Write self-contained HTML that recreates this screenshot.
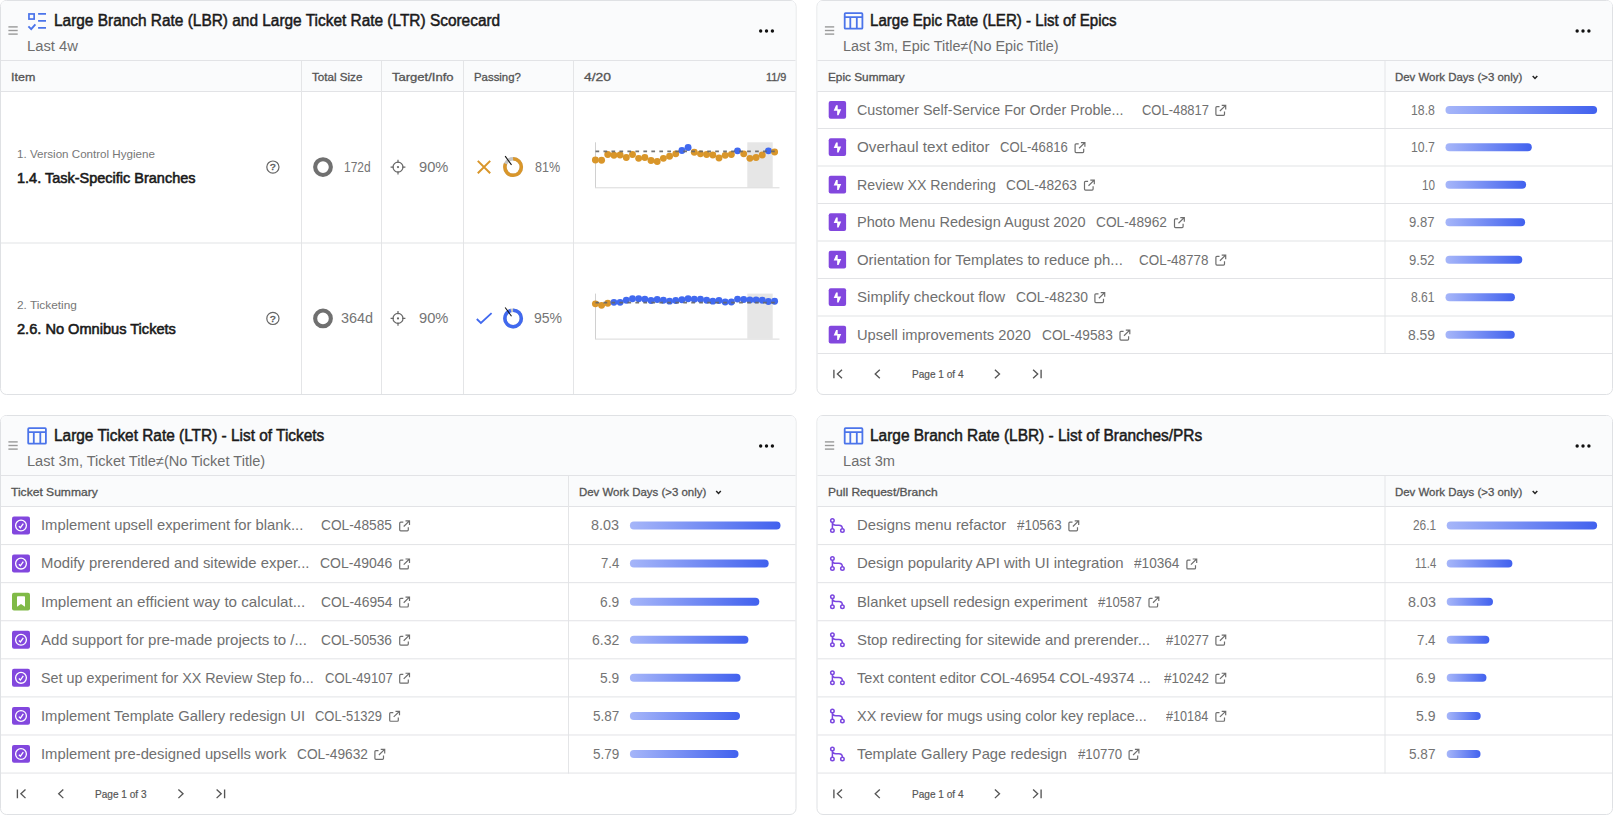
<!DOCTYPE html>
<html lang="en"><head><meta charset="utf-8"><title>Scorecard Dashboard</title>
<style>
html,body{margin:0;padding:0;background:#fff}
body{width:1613px;height:815px;position:relative;overflow:hidden;font-family:'Liberation Sans', sans-serif}
#g{position:absolute;left:0;top:0}
.t{position:absolute;white-space:pre;line-height:1;transform-origin:0 50%;display:block}
</style></head><body>
<svg id="g" width="1613" height="815" viewBox="0 0 1613 815">
<defs><linearGradient id="bg" x1="0" y1="0" x2="1" y2="0"><stop offset="0" stop-color="#a6b6f9"/><stop offset="1" stop-color="#4161ee"/></linearGradient></defs>
<rect x="0.50" y="0.50" width="795.50" height="394.00" rx="6" fill="#fff" stroke="#dfe1e4" stroke-width="1"/>
<path d="M1.00 91.00 V6.00 Q1.00 1.00 6.00 1.00 H790.50 Q795.50 1.00 795.50 6.00 V91.00 Z" fill="#fafbfc"/>
<rect x="1.00" y="60.00" width="794.50" height="1.00" fill="#e2e3e6" />
<rect x="1.00" y="91.00" width="794.50" height="1.00" fill="#e2e3e6" />
<rect x="8.40" y="26.20" width="9.30" height="1.40" fill="#9a9a9a" />
<rect x="8.40" y="29.80" width="9.30" height="1.40" fill="#9a9a9a" />
<rect x="8.40" y="33.40" width="9.30" height="1.40" fill="#9a9a9a" />
<circle cx="760.65" cy="31.00" r="1.7" fill="#111"/>
<circle cx="766.50" cy="31.00" r="1.7" fill="#111"/>
<circle cx="772.40" cy="31.00" r="1.7" fill="#111"/>
<g fill="none" stroke="#4b74ea"><rect x="28.95" y="13.95" width="5.2" height="5.1" stroke-width="1.7"/><path d="M38.1 13.95 h7.9 M38.1 20.9 h7.9 M38.1 27.95 h7.9" stroke-width="1.8"/><path d="M28.4 26.3 l2.8 2.8 l4.2 -4.8" stroke-width="1.9"/></g>
<rect x="301.00" y="61.00" width="1.00" height="333.00" fill="#e4e5e7" />
<rect x="381.00" y="61.00" width="1.00" height="333.00" fill="#e4e5e7" />
<rect x="463.00" y="61.00" width="1.00" height="333.00" fill="#e4e5e7" />
<rect x="573.00" y="61.00" width="1.00" height="333.00" fill="#e4e5e7" />
<rect x="1.00" y="242.50" width="794.50" height="1.00" fill="#e2e3e6" />
<circle cx="272.9" cy="167.10" r="6.1" fill="none" stroke="#666" stroke-width="1.2"/>
<circle cx="323" cy="167.10" r="7.85" fill="none" stroke="#707070" stroke-width="4.1"/>
<g fill="none" stroke="#666" stroke-width="1.2"><circle cx="398" cy="167.10" r="5"/><path d="M398 159.70 v3.2 M398 171.30 v3.2 M390.6 167.10 h3.2 M402.2 167.10 h3.2"/></g><circle cx="398" cy="167.10" r="1.1" fill="#666"/>
<path d="M477.8 160.90 l12.4 12.4 M490.2 160.90 l-12.4 12.4" fill="none" stroke="#d9962a" stroke-width="2"/>
<circle cx="513.10" cy="167.10" r="8.25" fill="none" stroke="#c4c4c4" stroke-width="3.5"/>
<circle cx="513.10" cy="167.10" r="8.25" fill="none" stroke="#d9962a" stroke-width="3.5" stroke-dasharray="41.99 51.84" transform="rotate(-90 513.10 167.10)"/>
<path d="M511.51 164.92 L505.16 156.18" stroke="#111" stroke-width="1.1"/>
<rect x="747.30" y="142.30" width="25.40" height="45.00" fill="#e6e6e6" />
<rect x="595.00" y="142.30" width="1.00" height="45.50" fill="#d0d0d0" />
<rect x="595.00" y="187.30" width="184.50" height="1.00" fill="#d9d9d9" />
<circle cx="595.40" cy="160.01" r="3.45" fill="#d9962a"/>
<circle cx="601.58" cy="160.28" r="3.45" fill="#d9962a"/>
<circle cx="607.76" cy="154.55" r="3.45" fill="#d9962a"/>
<circle cx="613.94" cy="155.23" r="3.45" fill="#d9962a"/>
<circle cx="620.12" cy="154.96" r="3.45" fill="#d9962a"/>
<circle cx="626.30" cy="157.55" r="3.45" fill="#d9962a"/>
<circle cx="632.48" cy="154.55" r="3.45" fill="#d9962a"/>
<circle cx="638.66" cy="158.37" r="3.45" fill="#d9962a"/>
<circle cx="644.84" cy="157.55" r="3.45" fill="#d9962a"/>
<circle cx="651.02" cy="160.55" r="3.45" fill="#d9962a"/>
<circle cx="657.20" cy="161.51" r="3.45" fill="#d9962a"/>
<circle cx="663.38" cy="158.37" r="3.45" fill="#d9962a"/>
<circle cx="669.56" cy="156.19" r="3.45" fill="#d9962a"/>
<circle cx="675.74" cy="153.87" r="3.45" fill="#d9962a"/>
<circle cx="681.92" cy="150.46" r="3.45" fill="#4169ef"/>
<circle cx="688.10" cy="147.46" r="3.45" fill="#4169ef"/>
<circle cx="694.28" cy="152.23" r="3.45" fill="#d9962a"/>
<circle cx="700.46" cy="153.87" r="3.45" fill="#d9962a"/>
<circle cx="706.64" cy="154.55" r="3.45" fill="#d9962a"/>
<circle cx="712.82" cy="154.96" r="3.45" fill="#d9962a"/>
<circle cx="719.00" cy="157.96" r="3.45" fill="#d9962a"/>
<circle cx="725.18" cy="155.37" r="3.45" fill="#d9962a"/>
<circle cx="731.36" cy="154.55" r="3.45" fill="#d9962a"/>
<circle cx="737.54" cy="150.87" r="3.45" fill="#4169ef"/>
<circle cx="743.72" cy="153.87" r="3.45" fill="#d9962a"/>
<circle cx="749.90" cy="158.37" r="3.45" fill="#d9962a"/>
<circle cx="756.08" cy="157.55" r="3.45" fill="#d9962a"/>
<circle cx="762.26" cy="154.96" r="3.45" fill="#d9962a"/>
<circle cx="768.44" cy="150.87" r="3.45" fill="#4169ef"/>
<circle cx="774.62" cy="151.96" r="3.45" fill="#d9962a"/>
<path d="M595.5 151.40 H776" stroke="#666" stroke-opacity="0.9" stroke-width="1.7" stroke-dasharray="3.7 4.28" fill="none"/>
<circle cx="272.9" cy="318.40" r="6.1" fill="none" stroke="#666" stroke-width="1.2"/>
<circle cx="323" cy="318.40" r="7.85" fill="none" stroke="#707070" stroke-width="4.1"/>
<g fill="none" stroke="#666" stroke-width="1.2"><circle cx="398" cy="318.40" r="5"/><path d="M398 311.00 v3.2 M398 322.60 v3.2 M390.6 318.40 h3.2 M402.2 318.40 h3.2"/></g><circle cx="398" cy="318.40" r="1.1" fill="#666"/>
<path d="M476.8 319.00 L480.9 323.00 L491.6 313.20" fill="none" stroke="#4169ef" stroke-width="1.8"/>
<circle cx="513.10" cy="318.40" r="8.25" fill="none" stroke="#c4c4c4" stroke-width="3.5"/>
<circle cx="513.10" cy="318.40" r="8.25" fill="none" stroke="#4169ef" stroke-width="3.5" stroke-dasharray="49.24 51.84" transform="rotate(-90 513.10 318.40)"/>
<path d="M511.51 316.22 L505.16 307.48" stroke="#111" stroke-width="1.1"/>
<rect x="747.30" y="293.60" width="25.40" height="45.00" fill="#e6e6e6" />
<rect x="595.00" y="293.60" width="1.00" height="45.50" fill="#d0d0d0" />
<rect x="595.00" y="338.60" width="184.50" height="1.00" fill="#d9d9d9" />
<circle cx="595.40" cy="303.87" r="3.45" fill="#d9962a"/>
<circle cx="601.58" cy="305.37" r="3.45" fill="#d9962a"/>
<circle cx="607.76" cy="303.19" r="3.45" fill="#d9962a"/>
<circle cx="613.94" cy="302.37" r="3.45" fill="#4169ef"/>
<circle cx="620.12" cy="302.37" r="3.45" fill="#4169ef"/>
<circle cx="626.30" cy="300.19" r="3.45" fill="#4169ef"/>
<circle cx="632.48" cy="298.69" r="3.45" fill="#4169ef"/>
<circle cx="638.66" cy="298.69" r="3.45" fill="#4169ef"/>
<circle cx="644.84" cy="299.23" r="3.45" fill="#4169ef"/>
<circle cx="651.02" cy="300.46" r="3.45" fill="#4169ef"/>
<circle cx="657.20" cy="299.50" r="3.45" fill="#4169ef"/>
<circle cx="663.38" cy="300.19" r="3.45" fill="#4169ef"/>
<circle cx="669.56" cy="301.14" r="3.45" fill="#4169ef"/>
<circle cx="675.74" cy="300.46" r="3.45" fill="#4169ef"/>
<circle cx="681.92" cy="299.78" r="3.45" fill="#4169ef"/>
<circle cx="688.10" cy="298.69" r="3.45" fill="#4169ef"/>
<circle cx="694.28" cy="299.23" r="3.45" fill="#4169ef"/>
<circle cx="700.46" cy="299.23" r="3.45" fill="#4169ef"/>
<circle cx="706.64" cy="300.19" r="3.45" fill="#4169ef"/>
<circle cx="712.82" cy="301.14" r="3.45" fill="#4169ef"/>
<circle cx="719.00" cy="300.46" r="3.45" fill="#4169ef"/>
<circle cx="725.18" cy="301.96" r="3.45" fill="#4169ef"/>
<circle cx="731.36" cy="301.96" r="3.45" fill="#4169ef"/>
<circle cx="737.54" cy="299.09" r="3.45" fill="#4169ef"/>
<circle cx="743.72" cy="299.50" r="3.45" fill="#4169ef"/>
<circle cx="749.90" cy="299.91" r="3.45" fill="#4169ef"/>
<circle cx="756.08" cy="299.91" r="3.45" fill="#4169ef"/>
<circle cx="762.26" cy="300.19" r="3.45" fill="#4169ef"/>
<circle cx="768.44" cy="301.55" r="3.45" fill="#4169ef"/>
<circle cx="774.62" cy="301.28" r="3.45" fill="#4169ef"/>
<path d="M595.5 302.70 H776" stroke="#666" stroke-opacity="0.9" stroke-width="1.7" stroke-dasharray="3.7 4.28" fill="none"/>
<rect x="817.00" y="0.50" width="795.50" height="394.00" rx="6" fill="#fff" stroke="#dfe1e4" stroke-width="1"/>
<path d="M817.50 91.00 V6.00 Q817.50 1.00 822.50 1.00 H1607.00 Q1612.00 1.00 1612.00 6.00 V91.00 Z" fill="#fafbfc"/>
<rect x="817.50" y="60.00" width="794.50" height="1.00" fill="#e2e3e6" />
<rect x="817.50" y="91.00" width="794.50" height="1.00" fill="#e2e3e6" />
<rect x="824.90" y="26.20" width="9.30" height="1.40" fill="#9a9a9a" />
<rect x="824.90" y="29.80" width="9.30" height="1.40" fill="#9a9a9a" />
<rect x="824.90" y="33.40" width="9.30" height="1.40" fill="#9a9a9a" />
<circle cx="1577.15" cy="31.00" r="1.7" fill="#111"/>
<circle cx="1583.00" cy="31.00" r="1.7" fill="#111"/>
<circle cx="1588.90" cy="31.00" r="1.7" fill="#111"/>
<g fill="none" stroke="#4b74ea" stroke-width="1.8"><rect x="844.70" y="13.10" width="17.70" height="15.60" rx="0.8"/><path d="M844.70 17.20 h17.7 M850.30 17.20 v11.5 M856.80 17.20 v11.5"/></g>
<path d="M1532.70 76.00 L1535.00 78.40 L1537.30 76.00" fill="none" stroke="#222" stroke-width="1.5"/>
<rect x="1384.50" y="61.00" width="1.00" height="293.00" fill="#e4e5e7" />
<rect x="817.50" y="128.00" width="794.50" height="1.00" fill="#e2e3e6" />
<rect x="828.70" y="101.10" width="17.4" height="17.6" rx="2" fill="#8247de"/>
<polygon fill="#fff" points="836.06,105.15 837.70,105.15 837.70,109.20 841.20,109.20 838.60,115.30 837.16,115.30 837.16,110.85 833.67,110.85"/>
<g fill="none" stroke="#6e6e6e" stroke-width="1.2"><path d="M1219.50 106.60 H1216.90 Q1215.90 106.60 1215.90 107.60 V114.30 Q1215.90 115.30 1216.90 115.30 H1223.50 Q1224.50 115.30 1224.50 114.30 V111.60"/><path d="M1219.90 111.00 L1225.60 105.40 M1221.70 105.40 H1225.70 V109.40"/></g>
<rect x="1445.50" y="106.00" width="151.60" height="8.00" fill="url(#bg)" rx="4" />
<rect x="817.50" y="165.50" width="794.50" height="1.00" fill="#e2e3e6" />
<rect x="828.70" y="138.35" width="17.4" height="17.6" rx="2" fill="#8247de"/>
<polygon fill="#fff" points="836.06,142.40 837.70,142.40 837.70,146.45 841.20,146.45 838.60,152.55 837.16,152.55 837.16,148.10 833.67,148.10"/>
<g fill="none" stroke="#6e6e6e" stroke-width="1.2"><path d="M1078.70 143.85 H1076.10 Q1075.10 143.85 1075.10 144.85 V151.55 Q1075.10 152.55 1076.10 152.55 H1082.70 Q1083.70 152.55 1083.70 151.55 V148.85"/><path d="M1079.10 148.25 L1084.80 142.65 M1080.90 142.65 H1084.90 V146.65"/></g>
<rect x="1445.50" y="143.25" width="86.28" height="8.00" fill="url(#bg)" rx="4" />
<rect x="817.50" y="203.00" width="794.50" height="1.00" fill="#e2e3e6" />
<rect x="828.70" y="175.85" width="17.4" height="17.6" rx="2" fill="#8247de"/>
<polygon fill="#fff" points="836.06,179.90 837.70,179.90 837.70,183.95 841.20,183.95 838.60,190.05 837.16,190.05 837.16,185.60 833.67,185.60"/>
<g fill="none" stroke="#6e6e6e" stroke-width="1.2"><path d="M1088.10 181.35 H1085.50 Q1084.50 181.35 1084.50 182.35 V189.05 Q1084.50 190.05 1085.50 190.05 H1092.10 Q1093.10 190.05 1093.10 189.05 V186.35"/><path d="M1088.50 185.75 L1094.20 180.15 M1090.30 180.15 H1094.30 V184.15"/></g>
<rect x="1445.50" y="180.75" width="80.64" height="8.00" fill="url(#bg)" rx="4" />
<rect x="817.50" y="240.50" width="794.50" height="1.00" fill="#e2e3e6" />
<rect x="828.70" y="213.35" width="17.4" height="17.6" rx="2" fill="#8247de"/>
<polygon fill="#fff" points="836.06,217.40 837.70,217.40 837.70,221.45 841.20,221.45 838.60,227.55 837.16,227.55 837.16,223.10 833.67,223.10"/>
<g fill="none" stroke="#6e6e6e" stroke-width="1.2"><path d="M1178.10 218.85 H1175.50 Q1174.50 218.85 1174.50 219.85 V226.55 Q1174.50 227.55 1175.50 227.55 H1182.10 Q1183.10 227.55 1183.10 226.55 V223.85"/><path d="M1178.50 223.25 L1184.20 217.65 M1180.30 217.65 H1184.30 V221.65"/></g>
<rect x="1445.50" y="218.25" width="79.59" height="8.00" fill="url(#bg)" rx="4" />
<rect x="817.50" y="278.00" width="794.50" height="1.00" fill="#e2e3e6" />
<rect x="828.70" y="250.85" width="17.4" height="17.6" rx="2" fill="#8247de"/>
<polygon fill="#fff" points="836.06,254.90 837.70,254.90 837.70,258.95 841.20,258.95 838.60,265.05 837.16,265.05 837.16,260.60 833.67,260.60"/>
<g fill="none" stroke="#6e6e6e" stroke-width="1.2"><path d="M1219.50 256.35 H1216.90 Q1215.90 256.35 1215.90 257.35 V264.05 Q1215.90 265.05 1216.90 265.05 H1223.50 Q1224.50 265.05 1224.50 264.05 V261.35"/><path d="M1219.90 260.75 L1225.60 255.15 M1221.70 255.15 H1225.70 V259.15"/></g>
<rect x="1445.50" y="255.75" width="76.77" height="8.00" fill="url(#bg)" rx="4" />
<rect x="817.50" y="315.50" width="794.50" height="1.00" fill="#e2e3e6" />
<rect x="828.70" y="288.35" width="17.4" height="17.6" rx="2" fill="#8247de"/>
<polygon fill="#fff" points="836.06,292.40 837.70,292.40 837.70,296.45 841.20,296.45 838.60,302.55 837.16,302.55 837.16,298.10 833.67,298.10"/>
<g fill="none" stroke="#6e6e6e" stroke-width="1.2"><path d="M1098.50 293.85 H1095.90 Q1094.90 293.85 1094.90 294.85 V301.55 Q1094.90 302.55 1095.90 302.55 H1102.50 Q1103.50 302.55 1103.50 301.55 V298.85"/><path d="M1098.90 298.25 L1104.60 292.65 M1100.70 292.65 H1104.70 V296.65"/></g>
<rect x="1445.50" y="293.25" width="69.43" height="8.00" fill="url(#bg)" rx="4" />
<rect x="817.50" y="353.00" width="794.50" height="1.00" fill="#e2e3e6" />
<rect x="828.70" y="325.85" width="17.4" height="17.6" rx="2" fill="#8247de"/>
<polygon fill="#fff" points="836.06,329.90 837.70,329.90 837.70,333.95 841.20,333.95 838.60,340.05 837.16,340.05 837.16,335.60 833.67,335.60"/>
<g fill="none" stroke="#6e6e6e" stroke-width="1.2"><path d="M1123.60 331.35 H1121.00 Q1120.00 331.35 1120.00 332.35 V339.05 Q1120.00 340.05 1121.00 340.05 H1127.60 Q1128.60 340.05 1128.60 339.05 V336.35"/><path d="M1124.00 335.75 L1129.70 330.15 M1125.80 330.15 H1129.80 V334.15"/></g>
<rect x="1445.50" y="330.75" width="69.27" height="8.00" fill="url(#bg)" rx="4" />
<path d="M833.90 369.75 v8.6 M842.00 369.75 l-4.6 4.3 l4.6 4.3" fill="none" stroke="#555" stroke-width="1.35"/>
<path d="M879.80 369.75 l-4.6 4.3 l4.6 4.3" fill="none" stroke="#555" stroke-width="1.35"/>
<path d="M994.90 369.75 l4.6 4.3 l-4.6 4.3" fill="none" stroke="#555" stroke-width="1.35"/>
<path d="M1033.10 369.75 l4.6 4.3 l-4.6 4.3 M1041.10 369.75 v8.6" fill="none" stroke="#555" stroke-width="1.35"/>
<rect x="0.50" y="415.50" width="795.50" height="399.00" rx="6" fill="#fff" stroke="#dfe1e4" stroke-width="1"/>
<path d="M1.00 506.00 V421.00 Q1.00 416.00 6.00 416.00 H790.50 Q795.50 416.00 795.50 421.00 V506.00 Z" fill="#fafbfc"/>
<rect x="1.00" y="475.00" width="794.50" height="1.00" fill="#e2e3e6" />
<rect x="1.00" y="506.00" width="794.50" height="1.00" fill="#e2e3e6" />
<rect x="8.40" y="441.20" width="9.30" height="1.40" fill="#9a9a9a" />
<rect x="8.40" y="444.80" width="9.30" height="1.40" fill="#9a9a9a" />
<rect x="8.40" y="448.40" width="9.30" height="1.40" fill="#9a9a9a" />
<circle cx="760.65" cy="446.00" r="1.7" fill="#111"/>
<circle cx="766.50" cy="446.00" r="1.7" fill="#111"/>
<circle cx="772.40" cy="446.00" r="1.7" fill="#111"/>
<g fill="none" stroke="#4b74ea" stroke-width="1.8"><rect x="28.20" y="428.10" width="17.70" height="15.60" rx="0.8"/><path d="M28.20 432.20 h17.7 M33.80 432.20 v11.5 M40.30 432.20 v11.5"/></g>
<path d="M716.20 491.00 L718.50 493.40 L720.80 491.00" fill="none" stroke="#222" stroke-width="1.5"/>
<rect x="568.00" y="476.00" width="1.00" height="297.56" fill="#e4e5e7" />
<rect x="1.00" y="544.08" width="794.50" height="1.00" fill="#e2e3e6" />
<rect x="12.00" y="516.49" width="18" height="17.9" rx="2" fill="#8247de"/>
<circle cx="21.00" cy="525.54" r="5.4" fill="none" stroke="#fff" stroke-width="1.3"/>
<path d="M18.90 526.24 l1.5 1.5 l2.9 -4.2" fill="none" stroke="#fff" stroke-width="1.3"/>
<g fill="none" stroke="#6e6e6e" stroke-width="1.2"><path d="M403.30 522.14 H400.70 Q399.70 522.14 399.70 523.14 V529.84 Q399.70 530.84 400.70 530.84 H407.30 Q408.30 530.84 408.30 529.84 V527.14"/><path d="M403.70 526.54 L409.40 520.94 M405.50 520.94 H409.50 V524.94"/></g>
<rect x="629.90" y="521.54" width="150.60" height="8.00" fill="url(#bg)" rx="4" />
<rect x="1.00" y="582.16" width="794.50" height="1.00" fill="#e2e3e6" />
<rect x="12.00" y="554.57" width="18" height="17.9" rx="2" fill="#8247de"/>
<circle cx="21.00" cy="563.62" r="5.4" fill="none" stroke="#fff" stroke-width="1.3"/>
<path d="M18.90 564.32 l1.5 1.5 l2.9 -4.2" fill="none" stroke="#fff" stroke-width="1.3"/>
<g fill="none" stroke="#6e6e6e" stroke-width="1.2"><path d="M403.30 560.22 H400.70 Q399.70 560.22 399.70 561.22 V567.92 Q399.70 568.92 400.70 568.92 H407.30 Q408.30 568.92 408.30 567.92 V565.22"/><path d="M403.70 564.62 L409.40 559.02 M405.50 559.02 H409.50 V563.02"/></g>
<rect x="629.90" y="559.62" width="138.78" height="8.00" fill="url(#bg)" rx="4" />
<rect x="1.00" y="620.24" width="794.50" height="1.00" fill="#e2e3e6" />
<rect x="12.00" y="592.65" width="18" height="17.9" rx="2" fill="#80ba47"/>
<path d="M17.00 596.95 q0 -0.8 0.8 -0.8 h6.4 q0.8 0 0.8 0.8 V606.85 L21.00 604.05 L17.00 606.85 Z" fill="#fff"/>
<g fill="none" stroke="#6e6e6e" stroke-width="1.2"><path d="M403.30 598.30 H400.70 Q399.70 598.30 399.70 599.30 V606.00 Q399.70 607.00 400.70 607.00 H407.30 Q408.30 607.00 408.30 606.00 V603.30"/><path d="M403.70 602.70 L409.40 597.10 M405.50 597.10 H409.50 V601.10"/></g>
<rect x="629.90" y="597.70" width="129.41" height="8.00" fill="url(#bg)" rx="4" />
<rect x="1.00" y="658.32" width="794.50" height="1.00" fill="#e2e3e6" />
<rect x="12.00" y="630.73" width="18" height="17.9" rx="2" fill="#8247de"/>
<circle cx="21.00" cy="639.78" r="5.4" fill="none" stroke="#fff" stroke-width="1.3"/>
<path d="M18.90 640.48 l1.5 1.5 l2.9 -4.2" fill="none" stroke="#fff" stroke-width="1.3"/>
<g fill="none" stroke="#6e6e6e" stroke-width="1.2"><path d="M403.30 636.38 H400.70 Q399.70 636.38 399.70 637.38 V644.08 Q399.70 645.08 400.70 645.08 H407.30 Q408.30 645.08 408.30 644.08 V641.38"/><path d="M403.70 640.78 L409.40 635.18 M405.50 635.18 H409.50 V639.18"/></g>
<rect x="629.90" y="635.78" width="118.53" height="8.00" fill="url(#bg)" rx="4" />
<rect x="1.00" y="696.40" width="794.50" height="1.00" fill="#e2e3e6" />
<rect x="12.00" y="668.81" width="18" height="17.9" rx="2" fill="#8247de"/>
<circle cx="21.00" cy="677.86" r="5.4" fill="none" stroke="#fff" stroke-width="1.3"/>
<path d="M18.90 678.56 l1.5 1.5 l2.9 -4.2" fill="none" stroke="#fff" stroke-width="1.3"/>
<g fill="none" stroke="#6e6e6e" stroke-width="1.2"><path d="M403.30 674.46 H400.70 Q399.70 674.46 399.70 675.46 V682.16 Q399.70 683.16 400.70 683.16 H407.30 Q408.30 683.16 408.30 682.16 V679.46"/><path d="M403.70 678.86 L409.40 673.26 M405.50 673.26 H409.50 V677.26"/></g>
<rect x="629.90" y="673.86" width="110.65" height="8.00" fill="url(#bg)" rx="4" />
<rect x="1.00" y="734.48" width="794.50" height="1.00" fill="#e2e3e6" />
<rect x="12.00" y="706.89" width="18" height="17.9" rx="2" fill="#8247de"/>
<circle cx="21.00" cy="715.94" r="5.4" fill="none" stroke="#fff" stroke-width="1.3"/>
<path d="M18.90 716.64 l1.5 1.5 l2.9 -4.2" fill="none" stroke="#fff" stroke-width="1.3"/>
<g fill="none" stroke="#6e6e6e" stroke-width="1.2"><path d="M393.30 712.54 H390.70 Q389.70 712.54 389.70 713.54 V720.24 Q389.70 721.24 390.70 721.24 H397.30 Q398.30 721.24 398.30 720.24 V717.54"/><path d="M393.70 716.94 L399.40 711.34 M395.50 711.34 H399.50 V715.34"/></g>
<rect x="629.90" y="711.94" width="110.09" height="8.00" fill="url(#bg)" rx="4" />
<rect x="1.00" y="772.56" width="794.50" height="1.00" fill="#e2e3e6" />
<rect x="12.00" y="744.97" width="18" height="17.9" rx="2" fill="#8247de"/>
<circle cx="21.00" cy="754.02" r="5.4" fill="none" stroke="#fff" stroke-width="1.3"/>
<path d="M18.90 754.72 l1.5 1.5 l2.9 -4.2" fill="none" stroke="#fff" stroke-width="1.3"/>
<g fill="none" stroke="#6e6e6e" stroke-width="1.2"><path d="M378.50 750.62 H375.90 Q374.90 750.62 374.90 751.62 V758.32 Q374.90 759.32 375.90 759.32 H382.50 Q383.50 759.32 383.50 758.32 V755.62"/><path d="M378.90 755.02 L384.60 749.42 M380.70 749.42 H384.70 V753.42"/></g>
<rect x="629.90" y="750.02" width="108.59" height="8.00" fill="url(#bg)" rx="4" />
<path d="M17.40 789.53 v8.6 M25.50 789.53 l-4.6 4.3 l4.6 4.3" fill="none" stroke="#555" stroke-width="1.35"/>
<path d="M63.30 789.53 l-4.6 4.3 l4.6 4.3" fill="none" stroke="#555" stroke-width="1.35"/>
<path d="M178.40 789.53 l4.6 4.3 l-4.6 4.3" fill="none" stroke="#555" stroke-width="1.35"/>
<path d="M216.60 789.53 l4.6 4.3 l-4.6 4.3 M224.60 789.53 v8.6" fill="none" stroke="#555" stroke-width="1.35"/>
<rect x="817.00" y="415.50" width="795.50" height="399.00" rx="6" fill="#fff" stroke="#dfe1e4" stroke-width="1"/>
<path d="M817.50 506.00 V421.00 Q817.50 416.00 822.50 416.00 H1607.00 Q1612.00 416.00 1612.00 421.00 V506.00 Z" fill="#fafbfc"/>
<rect x="817.50" y="475.00" width="794.50" height="1.00" fill="#e2e3e6" />
<rect x="817.50" y="506.00" width="794.50" height="1.00" fill="#e2e3e6" />
<rect x="824.90" y="441.20" width="9.30" height="1.40" fill="#9a9a9a" />
<rect x="824.90" y="444.80" width="9.30" height="1.40" fill="#9a9a9a" />
<rect x="824.90" y="448.40" width="9.30" height="1.40" fill="#9a9a9a" />
<circle cx="1577.15" cy="446.00" r="1.7" fill="#111"/>
<circle cx="1583.00" cy="446.00" r="1.7" fill="#111"/>
<circle cx="1588.90" cy="446.00" r="1.7" fill="#111"/>
<g fill="none" stroke="#4b74ea" stroke-width="1.8"><rect x="844.70" y="428.10" width="17.70" height="15.60" rx="0.8"/><path d="M844.70 432.20 h17.7 M850.30 432.20 v11.5 M856.80 432.20 v11.5"/></g>
<path d="M1532.70 491.00 L1535.00 493.40 L1537.30 491.00" fill="none" stroke="#222" stroke-width="1.5"/>
<rect x="1384.50" y="476.00" width="1.00" height="297.56" fill="#e4e5e7" />
<rect x="817.50" y="544.08" width="794.50" height="1.00" fill="#e2e3e6" />
<g fill="none" stroke="#7b47e0" stroke-width="1.5"><circle cx="832.40" cy="520.54" r="1.75"/><circle cx="832.40" cy="530.54" r="1.75"/><circle cx="842.40" cy="530.54" r="1.75"/><path d="M832.40 522.34 V528.74 M832.40 522.34 C832.40 525.04 833.70 525.24 835.90 525.24 H838.90 C841.30 525.24 842.40 526.34 842.40 528.74"/></g>
<g fill="none" stroke="#6e6e6e" stroke-width="1.2"><path d="M1072.50 522.14 H1069.90 Q1068.90 522.14 1068.90 523.14 V529.84 Q1068.90 530.84 1069.90 530.84 H1076.50 Q1077.50 530.84 1077.50 529.84 V527.14"/><path d="M1072.90 526.54 L1078.60 520.94 M1074.70 520.94 H1078.70 V524.94"/></g>
<rect x="1446.70" y="521.54" width="150.40" height="8.00" fill="url(#bg)" rx="4" />
<rect x="817.50" y="582.16" width="794.50" height="1.00" fill="#e2e3e6" />
<g fill="none" stroke="#7b47e0" stroke-width="1.5"><circle cx="832.40" cy="558.62" r="1.75"/><circle cx="832.40" cy="568.62" r="1.75"/><circle cx="842.40" cy="568.62" r="1.75"/><path d="M832.40 560.42 V566.82 M832.40 560.42 C832.40 563.12 833.70 563.32 835.90 563.32 H838.90 C841.30 563.32 842.40 564.42 842.40 566.82"/></g>
<g fill="none" stroke="#6e6e6e" stroke-width="1.2"><path d="M1190.50 560.22 H1187.90 Q1186.90 560.22 1186.90 561.22 V567.92 Q1186.90 568.92 1187.90 568.92 H1194.50 Q1195.50 568.92 1195.50 567.92 V565.22"/><path d="M1190.90 564.62 L1196.60 559.02 M1192.70 559.02 H1196.70 V563.02"/></g>
<rect x="1446.70" y="559.62" width="65.69" height="8.00" fill="url(#bg)" rx="4" />
<rect x="817.50" y="620.24" width="794.50" height="1.00" fill="#e2e3e6" />
<g fill="none" stroke="#7b47e0" stroke-width="1.5"><circle cx="832.40" cy="596.70" r="1.75"/><circle cx="832.40" cy="606.70" r="1.75"/><circle cx="842.40" cy="606.70" r="1.75"/><path d="M832.40 598.50 V604.90 M832.40 598.50 C832.40 601.20 833.70 601.40 835.90 601.40 H838.90 C841.30 601.40 842.40 602.50 842.40 604.90"/></g>
<g fill="none" stroke="#6e6e6e" stroke-width="1.2"><path d="M1152.60 598.30 H1150.00 Q1149.00 598.30 1149.00 599.30 V606.00 Q1149.00 607.00 1150.00 607.00 H1156.60 Q1157.60 607.00 1157.60 606.00 V603.30"/><path d="M1153.00 602.70 L1158.70 597.10 M1154.80 597.10 H1158.80 V601.10"/></g>
<rect x="1446.70" y="597.70" width="46.27" height="8.00" fill="url(#bg)" rx="4" />
<rect x="817.50" y="658.32" width="794.50" height="1.00" fill="#e2e3e6" />
<g fill="none" stroke="#7b47e0" stroke-width="1.5"><circle cx="832.40" cy="634.78" r="1.75"/><circle cx="832.40" cy="644.78" r="1.75"/><circle cx="842.40" cy="644.78" r="1.75"/><path d="M832.40 636.58 V642.98 M832.40 636.58 C832.40 639.28 833.70 639.48 835.90 639.48 H838.90 C841.30 639.48 842.40 640.58 842.40 642.98"/></g>
<g fill="none" stroke="#6e6e6e" stroke-width="1.2"><path d="M1219.50 636.38 H1216.90 Q1215.90 636.38 1215.90 637.38 V644.08 Q1215.90 645.08 1216.90 645.08 H1223.50 Q1224.50 645.08 1224.50 644.08 V641.38"/><path d="M1219.90 640.78 L1225.60 635.18 M1221.70 635.18 H1225.70 V639.18"/></g>
<rect x="1446.70" y="635.78" width="42.64" height="8.00" fill="url(#bg)" rx="4" />
<rect x="817.50" y="696.40" width="794.50" height="1.00" fill="#e2e3e6" />
<g fill="none" stroke="#7b47e0" stroke-width="1.5"><circle cx="832.40" cy="672.86" r="1.75"/><circle cx="832.40" cy="682.86" r="1.75"/><circle cx="842.40" cy="682.86" r="1.75"/><path d="M832.40 674.66 V681.06 M832.40 674.66 C832.40 677.36 833.70 677.56 835.90 677.56 H838.90 C841.30 677.56 842.40 678.66 842.40 681.06"/></g>
<g fill="none" stroke="#6e6e6e" stroke-width="1.2"><path d="M1219.50 674.46 H1216.90 Q1215.90 674.46 1215.90 675.46 V682.16 Q1215.90 683.16 1216.90 683.16 H1223.50 Q1224.50 683.16 1224.50 682.16 V679.46"/><path d="M1219.90 678.86 L1225.60 673.26 M1221.70 673.26 H1225.70 V677.26"/></g>
<rect x="1446.70" y="673.86" width="39.76" height="8.00" fill="url(#bg)" rx="4" />
<rect x="817.50" y="734.48" width="794.50" height="1.00" fill="#e2e3e6" />
<g fill="none" stroke="#7b47e0" stroke-width="1.5"><circle cx="832.40" cy="710.94" r="1.75"/><circle cx="832.40" cy="720.94" r="1.75"/><circle cx="842.40" cy="720.94" r="1.75"/><path d="M832.40 712.74 V719.14 M832.40 712.74 C832.40 715.44 833.70 715.64 835.90 715.64 H838.90 C841.30 715.64 842.40 716.74 842.40 719.14"/></g>
<g fill="none" stroke="#6e6e6e" stroke-width="1.2"><path d="M1219.50 712.54 H1216.90 Q1215.90 712.54 1215.90 713.54 V720.24 Q1215.90 721.24 1216.90 721.24 H1223.50 Q1224.50 721.24 1224.50 720.24 V717.54"/><path d="M1219.90 716.94 L1225.60 711.34 M1221.70 711.34 H1225.70 V715.34"/></g>
<rect x="1446.70" y="711.94" width="34.00" height="8.00" fill="url(#bg)" rx="4" />
<rect x="817.50" y="772.56" width="794.50" height="1.00" fill="#e2e3e6" />
<g fill="none" stroke="#7b47e0" stroke-width="1.5"><circle cx="832.40" cy="749.02" r="1.75"/><circle cx="832.40" cy="759.02" r="1.75"/><circle cx="842.40" cy="759.02" r="1.75"/><path d="M832.40 750.82 V757.22 M832.40 750.82 C832.40 753.52 833.70 753.72 835.90 753.72 H838.90 C841.30 753.72 842.40 754.82 842.40 757.22"/></g>
<g fill="none" stroke="#6e6e6e" stroke-width="1.2"><path d="M1132.70 750.62 H1130.10 Q1129.10 750.62 1129.10 751.62 V758.32 Q1129.10 759.32 1130.10 759.32 H1136.70 Q1137.70 759.32 1137.70 758.32 V755.62"/><path d="M1133.10 755.02 L1138.80 749.42 M1134.90 749.42 H1138.90 V753.42"/></g>
<rect x="1446.70" y="750.02" width="33.83" height="8.00" fill="url(#bg)" rx="4" />
<path d="M833.90 789.53 v8.6 M842.00 789.53 l-4.6 4.3 l4.6 4.3" fill="none" stroke="#555" stroke-width="1.35"/>
<path d="M879.80 789.53 l-4.6 4.3 l4.6 4.3" fill="none" stroke="#555" stroke-width="1.35"/>
<path d="M994.90 789.53 l4.6 4.3 l-4.6 4.3" fill="none" stroke="#555" stroke-width="1.35"/>
<path d="M1033.10 789.53 l4.6 4.3 l-4.6 4.3 M1041.10 789.53 v8.6" fill="none" stroke="#555" stroke-width="1.35"/>
</svg>
<section class="panel" aria-label="Scorecard">
<span class="t" style="left:53.50px;top:12px;line-height:17px;font-size:15.8px;color:#1a1a1a;transform:scaleX(0.9760);-webkit-text-stroke:0.5px #1a1a1a">Large Branch Rate (LBR) and Large Ticket Rate (LTR) Scorecard</span>
<span class="t" style="left:26.90px;top:38px;line-height:16px;font-size:14px;color:#6e6e6e;transform:scaleX(1.0549)">Last 4w</span>
<span class="t" style="left:11.20px;top:71px;line-height:12px;font-size:11px;color:#555;transform:scaleX(1.1352);-webkit-text-stroke:0.3px #555">Item</span>
<span class="t" style="left:312.00px;top:71px;line-height:12px;font-size:11px;color:#555;transform:scaleX(1.0565);-webkit-text-stroke:0.3px #555">Total Size</span>
<span class="t" style="left:392.00px;top:71px;line-height:12px;font-size:11px;color:#555;transform:scaleX(1.1850);-webkit-text-stroke:0.3px #555">Target/Info</span>
<span class="t" style="left:474.20px;top:71px;line-height:12px;font-size:11px;color:#555;transform:scaleX(1.0361);-webkit-text-stroke:0.3px #555">Passing?</span>
<span class="t" style="left:583.80px;top:71px;line-height:12px;font-size:11px;color:#555;transform:scaleX(1.2604);-webkit-text-stroke:0.3px #555">4/20</span>
<span class="t" style="left:765.50px;top:71px;line-height:12px;font-size:11px;color:#555;transform:scaleX(0.9906);-webkit-text-stroke:0.3px #555">11/9</span>
<span class="t" style="left:16.80px;top:148px;line-height:12px;font-size:11.5px;color:#777;transform:scaleX(1.0079)">1. Version Control Hygiene</span>
<span class="t" style="left:16.80px;top:171px;line-height:15px;font-size:13.8px;color:#1a1a1a;transform:scaleX(1.0500);-webkit-text-stroke:0.55px #1a1a1a">1.4. Task-Specific Branches</span>
<span class="t" style="left:270.00px;top:161px;line-height:11px;font-size:9.5px;color:#5a5a5a;transform:scaleX(1.0572);-webkit-text-stroke:0.4px #5a5a5a">?</span>
<span class="t" style="left:343.80px;top:159px;line-height:16px;font-size:14.8px;color:#757575;transform:scaleX(0.8080)">172d</span>
<span class="t" style="left:418.50px;top:159px;line-height:16px;font-size:14.8px;color:#757575;transform:scaleX(0.9924)">90%</span>
<span class="t" style="left:535.10px;top:159px;line-height:16px;font-size:14.8px;color:#757575;transform:scaleX(0.8506)">81%</span>
<span class="t" style="left:16.80px;top:299px;line-height:12px;font-size:11.5px;color:#777;transform:scaleX(1.0280)">2. Ticketing</span>
<span class="t" style="left:16.80px;top:322px;line-height:15px;font-size:13.8px;color:#1a1a1a;transform:scaleX(1.0572);-webkit-text-stroke:0.55px #1a1a1a">2.6. No Omnibus Tickets</span>
<span class="t" style="left:270.00px;top:313px;line-height:11px;font-size:9.5px;color:#5a5a5a;transform:scaleX(1.0572);-webkit-text-stroke:0.4px #5a5a5a">?</span>
<span class="t" style="left:340.80px;top:310px;line-height:16px;font-size:14.8px;color:#757575;transform:scaleX(0.9750)">364d</span>
<span class="t" style="left:418.50px;top:310px;line-height:16px;font-size:14.8px;color:#757575;transform:scaleX(0.9924)">90%</span>
<span class="t" style="left:533.50px;top:310px;line-height:16px;font-size:14.8px;color:#757575;transform:scaleX(0.9485)">95%</span>
</section>
<section class="panel" aria-label="List of Epics">
<span class="t" style="left:870.00px;top:12px;line-height:17px;font-size:15.8px;color:#1a1a1a;transform:scaleX(0.9554);-webkit-text-stroke:0.5px #1a1a1a">Large Epic Rate (LER) - List of Epics</span>
<span class="t" style="left:843.40px;top:38px;line-height:16px;font-size:14px;color:#6e6e6e;transform:scaleX(1.0263)">Last 3m, Epic Title≠(No Epic Title)</span>
<span class="t" style="left:827.50px;top:71px;line-height:12px;font-size:11px;color:#555;transform:scaleX(1.0723);-webkit-text-stroke:0.3px #555">Epic Summary</span>
<span class="t" style="left:1395.40px;top:71px;line-height:12px;font-size:11px;color:#555;transform:scaleX(1.0396);-webkit-text-stroke:0.3px #555">Dev Work Days (&gt;3 only)</span>
<span class="t" style="left:857.30px;top:101px;line-height:17px;font-size:15.0px;color:#707070;transform:scaleX(0.9543)">Customer Self-Service For Order Proble...</span>
<span class="t" style="left:1141.60px;top:101px;line-height:17px;font-size:15.0px;color:#707070;transform:scaleX(0.8638)">COL-48817</span>
<span class="t" style="left:1410.80px;top:101px;line-height:17px;font-size:15.0px;color:#747474;transform:scaleX(0.8184)">18.8</span>
<span class="t" style="left:857.30px;top:138px;line-height:17px;font-size:15.0px;color:#707070;transform:scaleX(1.0129)">Overhaul text editor</span>
<span class="t" style="left:1000.00px;top:138px;line-height:17px;font-size:15.0px;color:#707070;transform:scaleX(0.8741)">COL-46816</span>
<span class="t" style="left:1410.80px;top:138px;line-height:17px;font-size:15.0px;color:#747474;transform:scaleX(0.8184)">10.7</span>
<span class="t" style="left:857.30px;top:176px;line-height:17px;font-size:15.0px;color:#707070;transform:scaleX(0.9458)">Review XX Rendering</span>
<span class="t" style="left:1006.20px;top:176px;line-height:17px;font-size:15.0px;color:#707070;transform:scaleX(0.9154)">COL-48263</span>
<span class="t" style="left:1421.70px;top:176px;line-height:17px;font-size:15.0px;color:#747474;transform:scaleX(0.7790)">10</span>
<span class="t" style="left:857.30px;top:213px;line-height:17px;font-size:15.0px;color:#707070;transform:scaleX(0.9686)">Photo Menu Redesign August 2020</span>
<span class="t" style="left:1096.20px;top:213px;line-height:17px;font-size:15.0px;color:#707070;transform:scaleX(0.9154)">COL-48962</span>
<span class="t" style="left:1409.30px;top:213px;line-height:17px;font-size:15.0px;color:#747474;transform:scaleX(0.8698)">9.87</span>
<span class="t" style="left:857.30px;top:251px;line-height:17px;font-size:15.0px;color:#707070;transform:scaleX(0.9941)">Orientation for Templates to reduce ph...</span>
<span class="t" style="left:1139.10px;top:251px;line-height:17px;font-size:15.0px;color:#707070;transform:scaleX(0.8961)">COL-48778</span>
<span class="t" style="left:1409.30px;top:251px;line-height:17px;font-size:15.0px;color:#747474;transform:scaleX(0.8698)">9.52</span>
<span class="t" style="left:857.30px;top:288px;line-height:17px;font-size:15.0px;color:#707070;transform:scaleX(1.0030)">Simplify checkout flow</span>
<span class="t" style="left:1015.70px;top:288px;line-height:17px;font-size:15.0px;color:#707070;transform:scaleX(0.9270)">COL-48230</span>
<span class="t" style="left:1411.10px;top:288px;line-height:17px;font-size:15.0px;color:#747474;transform:scaleX(0.8081)">8.61</span>
<span class="t" style="left:857.30px;top:326px;line-height:17px;font-size:15.0px;color:#707070;transform:scaleX(0.9798)">Upsell improvements 2020</span>
<span class="t" style="left:1041.90px;top:326px;line-height:17px;font-size:15.0px;color:#707070;transform:scaleX(0.9128)">COL-49583</span>
<span class="t" style="left:1407.60px;top:326px;line-height:17px;font-size:15.0px;color:#747474;transform:scaleX(0.9280)">8.59</span>
<span class="t" style="left:911.70px;top:368px;line-height:12px;font-size:11px;color:#555;transform:scaleX(0.9150);-webkit-text-stroke:0.2px #555">Page 1 of 4</span>
</section>
<section class="panel" aria-label="List of Tickets">
<span class="t" style="left:53.50px;top:427px;line-height:17px;font-size:15.8px;color:#1a1a1a;transform:scaleX(0.9754);-webkit-text-stroke:0.5px #1a1a1a">Large Ticket Rate (LTR) - List of Tickets</span>
<span class="t" style="left:26.90px;top:453px;line-height:16px;font-size:14px;color:#6e6e6e;transform:scaleX(1.0418)">Last 3m, Ticket Title≠(No Ticket Title)</span>
<span class="t" style="left:11.00px;top:486px;line-height:12px;font-size:11px;color:#555;transform:scaleX(1.0968);-webkit-text-stroke:0.3px #555">Ticket Summary</span>
<span class="t" style="left:578.90px;top:486px;line-height:12px;font-size:11px;color:#555;transform:scaleX(1.0396);-webkit-text-stroke:0.3px #555">Dev Work Days (&gt;3 only)</span>
<span class="t" style="left:40.80px;top:516px;line-height:17px;font-size:15.0px;color:#707070;transform:scaleX(0.9862)">Implement upsell experiment for blank...</span>
<span class="t" style="left:321.40px;top:516px;line-height:17px;font-size:15.0px;color:#707070;transform:scaleX(0.9154)">COL-48585</span>
<span class="t" style="left:591.10px;top:516px;line-height:17px;font-size:15.0px;color:#747474;transform:scaleX(0.9588)">8.03</span>
<span class="t" style="left:40.80px;top:554px;line-height:17px;font-size:15.0px;color:#707070;transform:scaleX(0.9908)">Modify prerendered and sitewide exper...</span>
<span class="t" style="left:320.10px;top:554px;line-height:17px;font-size:15.0px;color:#707070;transform:scaleX(0.9322)">COL-49046</span>
<span class="t" style="left:600.80px;top:554px;line-height:17px;font-size:15.0px;color:#747474;transform:scaleX(0.8773)">7.4</span>
<span class="t" style="left:40.80px;top:593px;line-height:17px;font-size:15.0px;color:#707070;transform:scaleX(1.0106)">Implement an efficient way to calculat...</span>
<span class="t" style="left:320.90px;top:593px;line-height:17px;font-size:15.0px;color:#707070;transform:scaleX(0.9218)">COL-46954</span>
<span class="t" style="left:600.00px;top:593px;line-height:17px;font-size:15.0px;color:#747474;transform:scaleX(0.9157)">6.9</span>
<span class="t" style="left:40.80px;top:631px;line-height:17px;font-size:15.0px;color:#707070;transform:scaleX(1.0032)">Add support for pre-made projects to /...</span>
<span class="t" style="left:321.40px;top:631px;line-height:17px;font-size:15.0px;color:#707070;transform:scaleX(0.9154)">COL-50536</span>
<span class="t" style="left:591.80px;top:631px;line-height:17px;font-size:15.0px;color:#747474;transform:scaleX(0.9348)">6.32</span>
<span class="t" style="left:40.80px;top:669px;line-height:17px;font-size:15.0px;color:#707070;transform:scaleX(0.9564)">Set up experiment for XX Review Step fo...</span>
<span class="t" style="left:324.60px;top:669px;line-height:17px;font-size:15.0px;color:#707070;transform:scaleX(0.8741)">COL-49107</span>
<span class="t" style="left:600.00px;top:669px;line-height:17px;font-size:15.0px;color:#747474;transform:scaleX(0.9157)">5.9</span>
<span class="t" style="left:40.80px;top:707px;line-height:17px;font-size:15.0px;color:#707070;transform:scaleX(0.9875)">Implement Template Gallery redesign UI</span>
<span class="t" style="left:315.40px;top:707px;line-height:17px;font-size:15.0px;color:#707070;transform:scaleX(0.8638)">COL-51329</span>
<span class="t" style="left:592.80px;top:707px;line-height:17px;font-size:15.0px;color:#747474;transform:scaleX(0.9006)">5.87</span>
<span class="t" style="left:40.80px;top:745px;line-height:17px;font-size:15.0px;color:#707070;transform:scaleX(0.9877)">Implement pre-designed upsells work</span>
<span class="t" style="left:296.60px;top:745px;line-height:17px;font-size:15.0px;color:#707070;transform:scaleX(0.9154)">COL-49632</span>
<span class="t" style="left:592.80px;top:745px;line-height:17px;font-size:15.0px;color:#747474;transform:scaleX(0.9006)">5.79</span>
<span class="t" style="left:95.20px;top:788px;line-height:12px;font-size:11px;color:#555;transform:scaleX(0.9150);-webkit-text-stroke:0.2px #555">Page 1 of 3</span>
</section>
<section class="panel" aria-label="List of Branches/PRs">
<span class="t" style="left:870.00px;top:427px;line-height:17px;font-size:15.8px;color:#1a1a1a;transform:scaleX(0.9777);-webkit-text-stroke:0.5px #1a1a1a">Large Branch Rate (LBR) - List of Branches/PRs</span>
<span class="t" style="left:843.40px;top:453px;line-height:16px;font-size:14px;color:#6e6e6e;transform:scaleX(1.0439)">Last 3m</span>
<span class="t" style="left:827.50px;top:486px;line-height:12px;font-size:11px;color:#555;transform:scaleX(1.0939);-webkit-text-stroke:0.3px #555">Pull Request/Branch</span>
<span class="t" style="left:1395.40px;top:486px;line-height:12px;font-size:11px;color:#555;transform:scaleX(1.0396);-webkit-text-stroke:0.3px #555">Dev Work Days (&gt;3 only)</span>
<span class="t" style="left:857.30px;top:516px;line-height:17px;font-size:15.0px;color:#707070;transform:scaleX(0.9887)">Designs menu refactor</span>
<span class="t" style="left:1016.90px;top:516px;line-height:17px;font-size:15.0px;color:#707070;transform:scaleX(0.8929)">#10563</span>
<span class="t" style="left:1412.60px;top:516px;line-height:17px;font-size:15.0px;color:#747474;transform:scaleX(0.7910)">26.1</span>
<span class="t" style="left:857.30px;top:554px;line-height:17px;font-size:15.0px;color:#707070;transform:scaleX(0.9957)">Design popularity API with UI integration</span>
<span class="t" style="left:1134.20px;top:554px;line-height:17px;font-size:15.0px;color:#707070;transform:scaleX(0.9069)">#10364</span>
<span class="t" style="left:1414.50px;top:554px;line-height:17px;font-size:15.0px;color:#747474;transform:scaleX(0.7546)">11.4</span>
<span class="t" style="left:857.30px;top:593px;line-height:17px;font-size:15.0px;color:#707070;transform:scaleX(0.9864)">Blanket upsell redesign experiment</span>
<span class="t" style="left:1098.00px;top:593px;line-height:17px;font-size:15.0px;color:#707070;transform:scaleX(0.8729)">#10587</span>
<span class="t" style="left:1407.80px;top:593px;line-height:17px;font-size:15.0px;color:#747474;transform:scaleX(0.9554)">8.03</span>
<span class="t" style="left:857.30px;top:631px;line-height:17px;font-size:15.0px;color:#707070;transform:scaleX(0.9930)">Stop redirecting for sitewide and prerender...</span>
<span class="t" style="left:1165.70px;top:631px;line-height:17px;font-size:15.0px;color:#707070;transform:scaleX(0.8569)">#10277</span>
<span class="t" style="left:1417.20px;top:631px;line-height:17px;font-size:15.0px;color:#747474;transform:scaleX(0.8869)">7.4</span>
<span class="t" style="left:857.30px;top:669px;line-height:17px;font-size:15.0px;color:#707070;transform:scaleX(0.9706)">Text content editor COL-46954 COL-49374 ...</span>
<span class="t" style="left:1163.70px;top:669px;line-height:17px;font-size:15.0px;color:#707070;transform:scaleX(0.8969)">#10242</span>
<span class="t" style="left:1416.20px;top:669px;line-height:17px;font-size:15.0px;color:#747474;transform:scaleX(0.9348)">6.9</span>
<span class="t" style="left:857.30px;top:707px;line-height:17px;font-size:15.0px;color:#707070;transform:scaleX(0.9656)">XX review for mugs using color key replace...</span>
<span class="t" style="left:1166.40px;top:707px;line-height:17px;font-size:15.0px;color:#707070;transform:scaleX(0.8429)">#10184</span>
<span class="t" style="left:1416.20px;top:707px;line-height:17px;font-size:15.0px;color:#747474;transform:scaleX(0.9348)">5.9</span>
<span class="t" style="left:857.30px;top:745px;line-height:17px;font-size:15.0px;color:#707070;transform:scaleX(0.9838)">Template Gallery Page redesign</span>
<span class="t" style="left:1077.60px;top:745px;line-height:17px;font-size:15.0px;color:#707070;transform:scaleX(0.8829)">#10770</span>
<span class="t" style="left:1409.20px;top:745px;line-height:17px;font-size:15.0px;color:#747474;transform:scaleX(0.9074)">5.87</span>
<span class="t" style="left:911.70px;top:788px;line-height:12px;font-size:11px;color:#555;transform:scaleX(0.9150);-webkit-text-stroke:0.2px #555">Page 1 of 4</span>
</section>
</body></html>
